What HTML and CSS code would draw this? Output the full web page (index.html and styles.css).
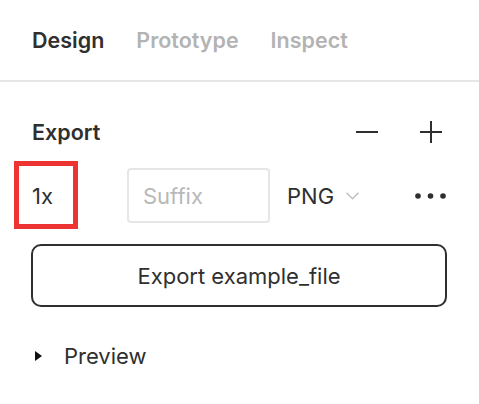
FILE: index.html
```html
<!DOCTYPE html>
<html>
<head>
<meta charset="utf-8">
<link rel="stylesheet" href="styles.css">
</head>
<body>
<div class="tabs">
  <span class="tab active">Design</span>
  <span class="tab">Prototype</span>
  <span class="tab">Inspect</span>
</div>
<div class="panel">
  <div class="section-header">
    <span class="section-title">Export</span>
    <div class="header-actions">
      <span class="icon-btn">
        <svg width="22" height="22" viewBox="0 0 22 22"><path d="M0 11H22" stroke="#2f2f2f" stroke-width="2"/></svg>
      </span>
      <span class="icon-btn">
        <svg width="22" height="22" viewBox="0 0 22 22"><path d="M0 11H22M11 0V22" stroke="#2f2f2f" stroke-width="2"/></svg>
      </span>
    </div>
  </div>
  <div class="export-row">
    <span class="scale">1x</span>
    <span class="suffix">Suffix</span>
    <span class="format">PNG
      <svg class="chevron" width="13" height="8" viewBox="0 0 13 8"><path d="M0.5 0.8L6.5 6.8L12.5 0.8" fill="none" stroke="#bdbdbd" stroke-width="1.3"/></svg>
    </span>
    <span class="more">
      <svg width="31" height="6" viewBox="0 0 31 6"><circle cx="3" cy="3" r="2.8" fill="#2f2f2f"/><circle cx="15.5" cy="3" r="2.8" fill="#2f2f2f"/><circle cx="28" cy="3" r="2.8" fill="#2f2f2f"/></svg>
    </span>
  </div>
  <button class="export-btn">Export example_file</button>
  <div class="preview">
    <svg class="caret" width="7" height="10" viewBox="0 0 7 10"><path d="M0 0L7 5L0 10Z" fill="#111"/></svg>
    <span>Preview</span>
  </div>
</div>
<div class="highlight"></div>
</body>
</html>
```
FILE: styles.css
```css
html, body {
  margin: 0;
  padding: 0;
  background: #ffffff;
}
body {
  width: 479px;
  height: 404px;
  position: relative;
  font-family: Inter, "Noto Sans", sans-serif;
  color: #2f2f2f;
  font-size: 22px;
  overflow: hidden;
}
.tabs {
  height: 80px;
  display: flex;
  align-items: center;
  gap: 32px;
  padding-left: 32px;
  border-bottom: 2px solid #e6e6e6;
}
.tab {
  font-weight: 600;
  font-size: 21.5px;
  color: #b3b3b3;
}
.tab.active {
  color: #2f2f2f;
}
.panel {
  padding: 0 32px 0 31px;
}
.section-header {
  margin-top: 38px;
  height: 24px;
  display: flex;
  align-items: center;
  justify-content: space-between;
}
.section-title {
  font-weight: 600;
  font-size: 21.5px;
  padding-left: 1px;
}
.header-actions {
  display: flex;
  gap: 32px;
}
.icon-btn {
  width: 32px;
  height: 24px;
  display: flex;
  align-items: center;
  justify-content: center;
}
.export-row {
  margin-top: 24px;
  height: 55px;
  display: flex;
  align-items: center;
}
.scale {
  width: 96px;
  padding-left: 1px;
  box-sizing: border-box;
}
.suffix {
  width: 143px;
  height: 55px;
  box-sizing: border-box;
  border: 2px solid #e6e6e6;
  border-radius: 4px;
  padding-left: 14px;
  display: flex;
  align-items: center;
  color: #b8b8b8;
}
.format {
  margin-left: 17px;
  display: flex;
  align-items: center;
  gap: 12px;
}
.chevron {
  margin-top: 1px;
}
.more {
  margin-left: auto;
  display: flex;
  align-items: center;
  margin-right: 1px;
}
.export-btn {
  display: block;
  margin-top: 21px;
  width: 100%;
  height: 63px;
  border: 2px solid #2f2f2f;
  border-radius: 10px;
  background: #ffffff;
  font-family: Inter, "Noto Sans", sans-serif;
  font-size: 22px;
  color: #2f2f2f;
}
.preview {
  margin-top: 37px;
  height: 24px;
  display: flex;
  align-items: center;
  gap: 22px;
  padding-left: 4px;
}
.highlight {
  position: absolute;
  left: 14px;
  top: 161px;
  width: 64px;
  height: 68px;
  box-sizing: border-box;
  border: 5px solid #ee3333;
}
```
